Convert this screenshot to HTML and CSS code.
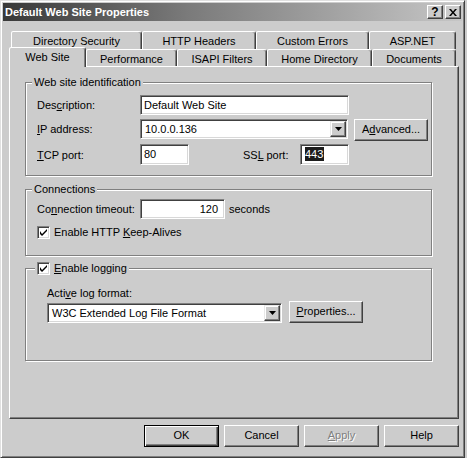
FILE: index.html
```html
<!DOCTYPE html>
<html>
<head>
<meta charset="utf-8">
<link rel="stylesheet" href="styles.css">
</head>
<body>
<div class="window">
  <div class="titlebar">
    <span class="title">Default Web Site Properties</span>
    <div class="caption-btns">
      <div class="cap-btn help">?</div>
      <div class="cap-btn close"><svg width="8" height="7" viewBox="0 0 8 7"><path d="M0 0h2l2 2.5L6 0h2L5 3.5 8 7H6L4 4.5 2 7H0l3-3.5z" fill="#000"/></svg></div>
    </div>
  </div>
  <div class="main">
    <div class="tabs">
      <div class="tabrow back">
        <div class="tab t-dirsec">Directory Security</div>
        <div class="tab t-http">HTTP Headers</div>
        <div class="tab t-errors">Custom Errors</div>
        <div class="tab t-asp">ASP.NET</div>
      </div>
      <div class="tabrow front">
        <div class="tab sel t-web">Web Site</div>
        <div class="tab t-perf">Performance</div>
        <div class="tab t-isapi">ISAPI Filters</div>
        <div class="tab t-home">Home Directory</div>
        <div class="tab t-docs">Documents</div>
      </div>
    </div>
    <div class="panel">
      <div class="group g-ident">
        <div class="legend">Web site identification</div>
        <div class="row r1">
          <span class="lbl">Des<u>c</u>ription:</span>
          <div class="field f-desc">Default Web Site</div>
        </div>
        <div class="row r2">
          <span class="lbl"><u>I</u>P address:</span>
          <div class="field combo f-ip"><span class="combo-text">10.0.0.136</span><span class="drop"><svg width="7" height="4" viewBox="0 0 7 4"><path d="M0 0h7L3.5 4z" fill="#000"/></svg></span></div>
          <div class="btn b-adv">A<u>d</u>vanced...</div>
        </div>
        <div class="row r3">
          <span class="lbl"><u>T</u>CP port:</span>
          <div class="field f-port">80</div>
          <span class="lbl lbl-ssl">SS<u>L</u> port:</span>
          <div class="field f-port f-ssl"><span class="selected">443</span></div>
        </div>
      </div>
      <div class="group g-conn">
        <div class="legend">Connections</div>
        <div class="row r-timeout">
          <span class="lbl">Co<u>n</u>nection timeout:</span>
          <div class="field f-timeout">120</div>
          <span class="unit">seconds</span>
        </div>
        <div class="row r-keep">
          <span class="check"><svg width="7" height="7" viewBox="0 0 7 7"><path d="M0 2v3l2 2 5-5V-0L2 5z" fill="#000"/></svg></span>
          <span class="check-lbl">Enable HTTP <u>K</u>eep-Alives</span>
        </div>
      </div>
      <div class="group g-log">
        <div class="legend legend-check">
          <span class="check"><svg width="7" height="7" viewBox="0 0 7 7"><path d="M0 2v3l2 2 5-5V-0L2 5z" fill="#000"/></svg></span>
          <span class="check-lbl"><u>E</u>nable logging</span>
        </div>
        <div class="lbl-block">Acti<u>v</u>e log format:</div>
        <div class="row r-format">
          <div class="field combo f-format"><span class="combo-text">W3C Extended Log File Format</span><span class="drop"><svg width="7" height="4" viewBox="0 0 7 4"><path d="M0 0h7L3.5 4z" fill="#000"/></svg></span></div>
          <div class="btn b-props"><u>P</u>roperties...</div>
        </div>
      </div>
    </div>
    <div class="footer">
      <div class="btn default">OK</div>
      <div class="btn">Cancel</div>
      <div class="btn disabled"><u>A</u>pply</div>
      <div class="btn">Help</div>
    </div>
  </div>
</div>
</body>
</html>
```
FILE: styles.css
```css
* { box-sizing: border-box; }
body {
  margin: 0;
  background: #cccccc;
  font-family: "Liberation Sans", Arial, sans-serif;
  font-size: 11px;
  color: #000;
}
u { text-decoration: underline; text-underline-offset: 1px; }

.window {
  width: 465px;
  height: 458px;
  background: #cccccc;
  border: 1px solid;
  border-color: #e0e0e0 #404040 #404040 #e0e0e0;
  box-shadow: inset 1px 1px #ffffff, inset -1px -1px #808080;
  padding: 2px;
}

.titlebar {
  height: 18px;
  background: linear-gradient(to right, #383838 0%, #7a7a7a 40%, #c6c6c6 100%);
  display: flex;
  align-items: center;
  justify-content: space-between;
}
.title {
  color: #fff;
  font-weight: bold;
  padding-left: 2px;
  line-height: 18px;
}
.caption-btns {
  display: flex;
  gap: 2px;
  margin-right: 1px;
}
.cap-btn {
  width: 16px;
  height: 14px;
  background: #cccccc;
  border: 1px solid;
  border-color: #ffffff #404040 #404040 #ffffff;
  box-shadow: inset -1px -1px #808080;
  display: flex;
  align-items: center;
  justify-content: center;
  font-weight: bold;
  font-size: 12px;
  line-height: 12px;
}

.main {
  padding: 10px 3px 0 6px;
}

.tabs { }
.tabrow {
  display: flex;
  align-items: flex-start;
}
.tabrow.back {
  height: 18px;
  margin-left: 2px;
}
.tabrow.front {
  height: 17px;
}
.tab {
  height: 100%;
  background: #cccccc;
  border: 1px solid;
  border-bottom: none;
  border-color: #ffffff #404040 transparent #ffffff;
  border-radius: 2px 3px 0 0;
  box-shadow: inset -1px 0 #808080;
  text-align: center;
  line-height: 16px;
  padding-top: 1px;
  white-space: nowrap;
}
.tabrow.back .tab { height: 18px; }
.tabrow.front .tab { height: 17px; }
.tabrow.front .tab.sel {
  height: 20px;
  margin-top: -2px;
  position: relative;
  z-index: 2;
}
.t-dirsec { width: 131px; }
.t-http { width: 114px; }
.t-errors { width: 113px; }
.t-asp { width: 87px; }
.t-web { width: 77px; }
.t-perf { width: 91px; }
.t-isapi { width: 90px; }
.t-home { width: 105px; }
.t-docs { width: 84px; }

.panel {
  height: 353px;
  border: 1px solid;
  border-color: #ffffff #404040 #404040 #ffffff;
  box-shadow: inset -1px -1px #808080;
  padding: 15px 0 0 15px;
}

.group {
  position: relative;
  width: 407px;
  border: 1px solid #808080;
  box-shadow: 1px 1px #ffffff, inset 1px 1px #ffffff;
}
.legend {
  position: absolute;
  top: -7px;
  left: 6px;
  padding: 0 2px;
  background: #cccccc;
  line-height: 13px;
}
.legend-check {
  left: 9px;
  top: -8px;
  display: flex;
  align-items: center;
  height: 15px;
}

.g-ident { height: 94px; padding: 12px 0 0 11px; }
.g-conn { height: 67px; margin-top: 13px; padding: 9px 0 0 11px; }
.g-log { height: 93px; margin-top: 12px; padding: 18px 0 0 21px; }

.row { display: flex; align-items: center; }
.lbl { width: 103px; white-space: nowrap; }
.r1 { height: 20px; }
.r2 { height: 22px; margin-top: 4px; align-items: flex-start; }
.r2 .lbl { line-height: 20px; }
.r3 { height: 21px; margin-top: 3px; }
.lbl-ssl { width: 57px; margin-left: 54px; }

.field {
  background: #ffffff;
  border: 1px solid;
  border-color: #808080 #ffffff #ffffff #808080;
  box-shadow: inset 1px 1px #404040, inset -1px -1px #d8d8d8;
  padding-left: 3px;
  height: 20px;
  line-height: 18px;
  white-space: nowrap;
}
.f-desc { width: 209px; }
.f-ip { width: 208px; }
.f-port { width: 49px; height: 21px; line-height: 19px; }
.f-ssl { padding-left: 4px; }
.selected {
  background: #1c1c1c;
  color: #ffffff;
  display: inline-block;
  line-height: 14px;
  padding: 0 1px 0 0;
}

.combo {
  display: flex;
  align-items: center;
  padding: 1px 1px 1px 4px;
}
.combo-text { flex: 1; line-height: 16px; }
.drop {
  width: 16px;
  height: 16px;
  background: #cccccc;
  border: 1px solid;
  border-color: #e8e8e8 #404040 #404040 #e8e8e8;
  box-shadow: inset -1px -1px #808080, inset 1px 1px #ffffff;
  display: flex;
  align-items: center;
  justify-content: center;
  padding-bottom: 1px;
}

.btn {
  width: 75px;
  height: 22px;
  background: #cccccc;
  border: 1px solid;
  border-color: #ffffff #404040 #404040 #ffffff;
  box-shadow: inset -1px -1px #808080;
  text-align: center;
  line-height: 19px;
  white-space: nowrap;
}
.b-adv { width: 74px; margin-left: 6px; }
.b-props { width: 74px; margin-left: 7px; }
.btn.default {
  border-color: #000000;
  box-shadow: inset 1px 1px #ffffff, inset -1px -1px #404040, inset -2px -2px #808080;
}
.btn.disabled {
  color: #808080;
  text-shadow: 1px 1px #ffffff;
}

.f-timeout {
  width: 85px;
  text-align: right;
  padding-right: 6px;
}
.unit { margin-left: 4px; }
.r-keep { margin-top: 7px; height: 13px; }
.check {
  width: 13px;
  height: 13px;
  background: #ffffff;
  border: 1px solid;
  border-color: #808080 #ffffff #ffffff #808080;
  box-shadow: inset 1px 1px #404040, inset -1px -1px #d8d8d8;
  display: flex;
  align-items: center;
  justify-content: center;
  flex: none;
}
.check-lbl { margin-left: 4px; line-height: 13px; white-space: nowrap; }

.lbl-block { line-height: 13px; }
.r-format { margin-top: 1px; height: 22px; align-items: flex-end; }
.f-format { width: 235px; }

.footer {
  display: flex;
  justify-content: flex-end;
  gap: 5px;
  margin-top: 6px;
}
```
